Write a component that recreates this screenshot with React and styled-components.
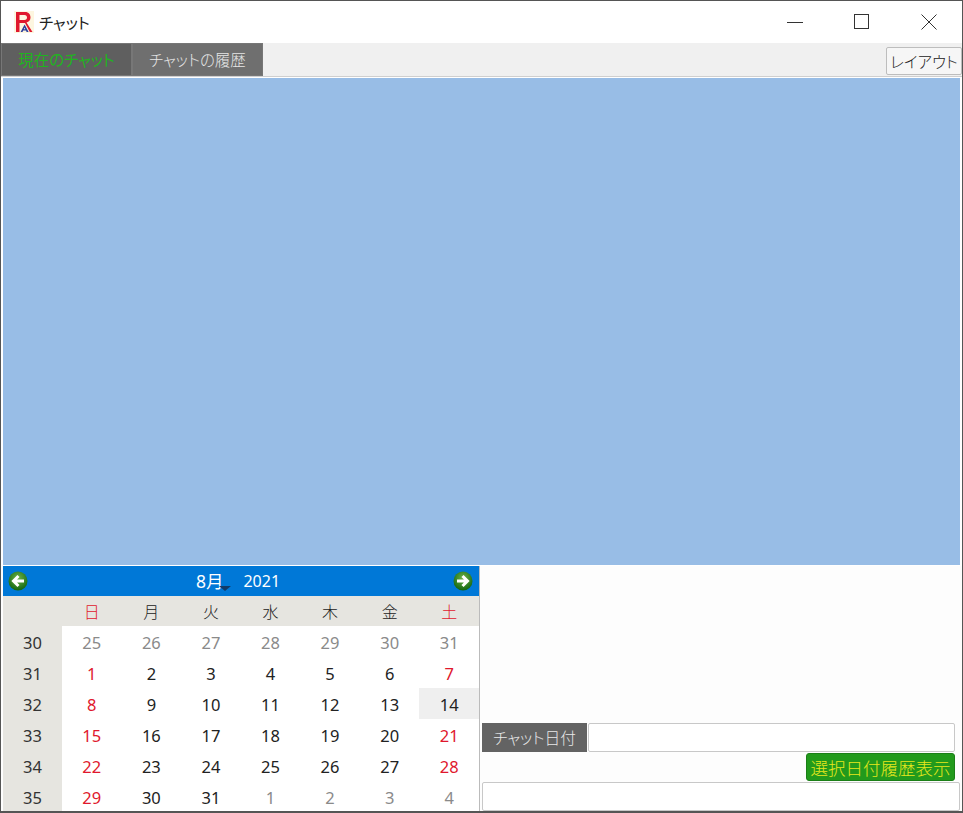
import React from 'react'
import styled, { createGlobalStyle } from 'styled-components'

const JP = '"Noto Sans", "Noto Sans CJK JP", sans-serif'

const GlobalStyle = createGlobalStyle`
  html, body {
    margin: 0;
    padding: 0;
    background: #fff;
  }
`

const weekDays = ['日', '月', '火', '水', '木', '金', '土']

const weeks = [
  { no: 30, days: [25, 26, 27, 28, 29, 30, 31], muted: true },
  { no: 31, days: [1, 2, 3, 4, 5, 6, 7] },
  { no: 32, days: [8, 9, 10, 11, 12, 13, 14] },
  { no: 33, days: [15, 16, 17, 18, 19, 20, 21] },
  { no: 34, days: [22, 23, 24, 25, 26, 27, 28] },
  { no: 35, days: [29, 30, 31, 1, 2, 3, 4], mutedFrom: 3 },
]

function ArrowButton({ right }) {
  return (
    <svg width="20" height="20" viewBox="0 0 20 20">
      <defs>
        <radialGradient id={right ? 'gr' : 'gl'} cx="50%" cy="35%" r="65%">
          <stop offset="0%" stopColor="#6fb44a" />
          <stop offset="100%" stopColor="#11650f" />
        </radialGradient>
      </defs>
      <circle cx="10" cy="10" r="9.5" fill={`url(#${right ? 'gr' : 'gl'})`} />
      <path
        d={right ? 'M4 10H14M9.5 5L14.5 10L9.5 15' : 'M16 10H6M10.5 5L5.5 10L10.5 15'}
        fill="none"
        stroke="#fff"
        strokeWidth="3"
      />
    </svg>
  )
}

export default function App() {
  return (
    <Window>
      <GlobalStyle />
      <TitleBar>
        <Logo viewBox="0 0 20 22">
          <rect width="20" height="22" fill="#fdf6e0" />
          <path d="M2 1H11C15 1 16.5 3.5 16.5 6.5C16.5 9 15 11 12.5 11.5L18.5 21H15.8L11 12H5.5V21H2ZM5.5 4V9H10.5C12.2 9 13 8 13 6.5C13 5 12.2 4 10.5 4Z" fill="#e0182d" />
          <path d="M10.6 13.5L14.6 21H12.6L12 19.5H9.2L8.5 21H6.6ZM10.5 16.4L9.8 18.2H11.3Z" fill="#2b3f9e" />
        </Logo>
        <TitleText>チャット</TitleText>
        <WindowButtons>
          <WindowButton>
            <svg width="16" height="16" viewBox="0 0 16 16"><path d="M0 8.5H16" stroke="#333" strokeWidth="1" /></svg>
          </WindowButton>
          <WindowButton>
            <svg width="16" height="16" viewBox="0 0 16 16"><rect x="0.5" y="0.5" width="14" height="14" fill="none" stroke="#333" /></svg>
          </WindowButton>
          <WindowButton>
            <svg width="16" height="16" viewBox="0 0 16 16"><path d="M0.5 0.5L15.5 15.5M15.5 0.5L0.5 15.5" stroke="#333" strokeWidth="1" /></svg>
          </WindowButton>
        </WindowButtons>
      </TitleBar>

      <TabStrip>
        <Tab $active>現在のチャット</Tab>
        <Tab>チャットの履歴</Tab>
        <LayoutButton>レイアウト</LayoutButton>
      </TabStrip>

      <ChatArea />

      <BottomRow>
        <Calendar>
          <CalendarHeader>
            <ArrowButton />
            <MonthLabel>
              <MonthName>8月<Caret /></MonthName>
              <span>2021</span>
            </MonthLabel>
            <ArrowButton right />
          </CalendarHeader>
          <DayGrid>
            <DowCell />
            {weekDays.map((d, i) => (
              <DowCell key={d} $red={i === 0 || i === 6}>{d}</DowCell>
            ))}
            {weeks.map((w) => (
              <React.Fragment key={w.no}>
                <WeekNo>{w.no}</WeekNo>
                {w.days.map((d, i) => {
                  const muted = w.muted || (w.mutedFrom !== undefined && i >= w.mutedFrom)
                  const today = w.no === 32 && d === 14
                  return (
                    <DayCell
                      key={i}
                      $muted={muted}
                      $red={!muted && !today && (i === 0 || i === 6)}
                      $today={today}
                    >
                      {d}
                    </DayCell>
                  )
                })}
              </React.Fragment>
            ))}
          </DayGrid>
        </Calendar>

        <SidePanel>
          <DateRow>
            <DateLabel>チャット日付</DateLabel>
            <TextBox />
          </DateRow>
          <ShowButton>選択日付履歴表示</ShowButton>
          <WideTextBox />
        </SidePanel>
      </BottomRow>
    </Window>
  )
}

const Window = styled.div`
  width: 963px;
  height: 813px;
  box-sizing: border-box;
  border: 1px solid #555;
  border-bottom-width: 2px;
  background: #fff;
  display: flex;
  flex-direction: column;
  overflow: hidden;
  font-family: ${JP};
`

const TitleBar = styled.div`
  height: 42px;
  display: flex;
  align-items: center;
  padding-left: 13px;
  background: #fff;
`

const Logo = styled.svg`
  width: 20px;
  height: 22px;
`

const TitleText = styled.div`
  margin-left: 5px;
  font-size: 15.5px;
  font-feature-settings: "palt";
  color: #222;
`

const WindowButtons = styled.div`
  margin-left: auto;
  display: flex;
`

const WindowButton = styled.div`
  width: 67px;
  height: 42px;
  display: flex;
  align-items: center;
  justify-content: center;
`

const TabStrip = styled.div`
  height: 33px;
  background: #f0f0f0;
  display: flex;
  align-items: flex-end;
  border-bottom: 1px solid #cfcfcf;
`

const Tab = styled.div`
  width: 131px;
  height: 33px;
  box-sizing: border-box;
  display: flex;
  align-items: center;
  justify-content: center;
  border: 1px solid #777;
  font-size: 15.5px;
  font-weight: ${(p) => (p.$active ? 400 : 300)};
  font-feature-settings: "palt";
  white-space: nowrap;
  color: ${(p) => (p.$active ? '#1fb41f' : '#e6e6e6')};
  background: ${(p) => (p.$active ? '#5f5f5f' : '#6f6f6f')};
`

const LayoutButton = styled.div`
  margin-left: auto;
  margin-bottom: 1px;
  width: 76px;
  height: 28px;
  box-sizing: border-box;
  background: #f6f6f6;
  border: 1px solid #bdbdbd;
  border-radius: 2px;
  display: flex;
  align-items: center;
  justify-content: center;
  font-size: 15.5px;
  font-weight: 300;
  font-feature-settings: "palt";
  white-space: nowrap;
  color: #222;
`

const ChatArea = styled.div`
  height: 487px;
  margin: 1px 2px;
  background: #98bde6;
`

const BottomRow = styled.div`
  flex: 1;
  min-height: 0;
  display: flex;
  background: #fdfdfd;
  padding-left: 2px;
`

const Calendar = styled.div`
  width: 476px;
  border-right: 1px solid #bbb;
  display: flex;
  flex-direction: column;
`

const CalendarHeader = styled.div`
  height: 30px;
  flex-shrink: 0;
  background: #0078d7;
  display: flex;
  align-items: center;
  justify-content: space-between;
  padding: 0 6px 0 5px;
  box-sizing: border-box;
  color: #fff;
  font-size: 16px;
`

const MonthLabel = styled.div`
  display: flex;
  align-items: center;
  gap: 20px;
  line-height: 20px;
  margin-left: -5px;
`

const MonthName = styled.span`
  position: relative;
  font-size: 17.5px;
`

const Caret = styled.i`
  position: absolute;
  right: -8px;
  bottom: 0;
  border-left: 6px solid transparent;
  border-right: 6px solid transparent;
  border-top: 5px solid #123a68;
`

const DayGrid = styled.div`
  flex: 1;
  display: grid;
  grid-template-columns: 59px repeat(7, 1fr);
  grid-template-rows: 30px repeat(5, 31px) 1fr;
  background: #fff;
`

const DowCell = styled.div`
  background: #e6e5e0;
  display: flex;
  align-items: center;
  justify-content: center;
  font-size: 16px;
  font-weight: 300;
  color: ${(p) => (p.$red ? '#e0182d' : '#222')};
`

const WeekNo = styled.div`
  background: #e6e5e0;
  display: flex;
  align-items: center;
  justify-content: center;
  padding-top: 2px;
  font-size: 16.5px;
  color: #333;
`

const DayCell = styled.div`
  display: flex;
  align-items: center;
  justify-content: center;
  padding-top: 2px;
  font-size: 16.5px;
  color: ${(p) => (p.$muted ? '#8a8a8a' : p.$red ? '#e0182d' : '#222')};
  background: ${(p) => (p.$today ? '#efefef' : 'transparent')};
`

const SidePanel = styled.div`
  flex: 1;
  display: flex;
  flex-direction: column;
  justify-content: flex-end;
  padding: 0 2px;
  gap: 1px;
`

const DateRow = styled.div`
  display: flex;
  height: 29px;
  padding-right: 5px;
`

const DateLabel = styled.div`
  width: 105px;
  background: #636363;
  color: #e8e8e8;
  font-size: 15.7px;
  font-weight: 300;
  font-feature-settings: "palt";
  white-space: nowrap;
  display: flex;
  align-items: center;
  justify-content: center;
`

const TextBox = styled.div`
  flex: 1;
  background: #fff;
  border: 1px solid #c8c8c8;
  border-radius: 2px;
  margin-left: 1px;
`

const ShowButton = styled.div`
  align-self: flex-end;
  margin-right: 5px;
  width: 149px;
  height: 28px;
  box-sizing: border-box;
  background: #229a1c;
  border: 1px solid #1b7f17;
  border-radius: 3px;
  color: #e6e81c;
  font-size: 17.5px;
  font-weight: 300;
  white-space: nowrap;
  display: flex;
  align-items: center;
  justify-content: center;
`

const WideTextBox = styled.div`
  height: 29px;
  box-sizing: border-box;
  background: #fff;
  border: 1px solid #c8c8c8;
  border-radius: 2px;
`
